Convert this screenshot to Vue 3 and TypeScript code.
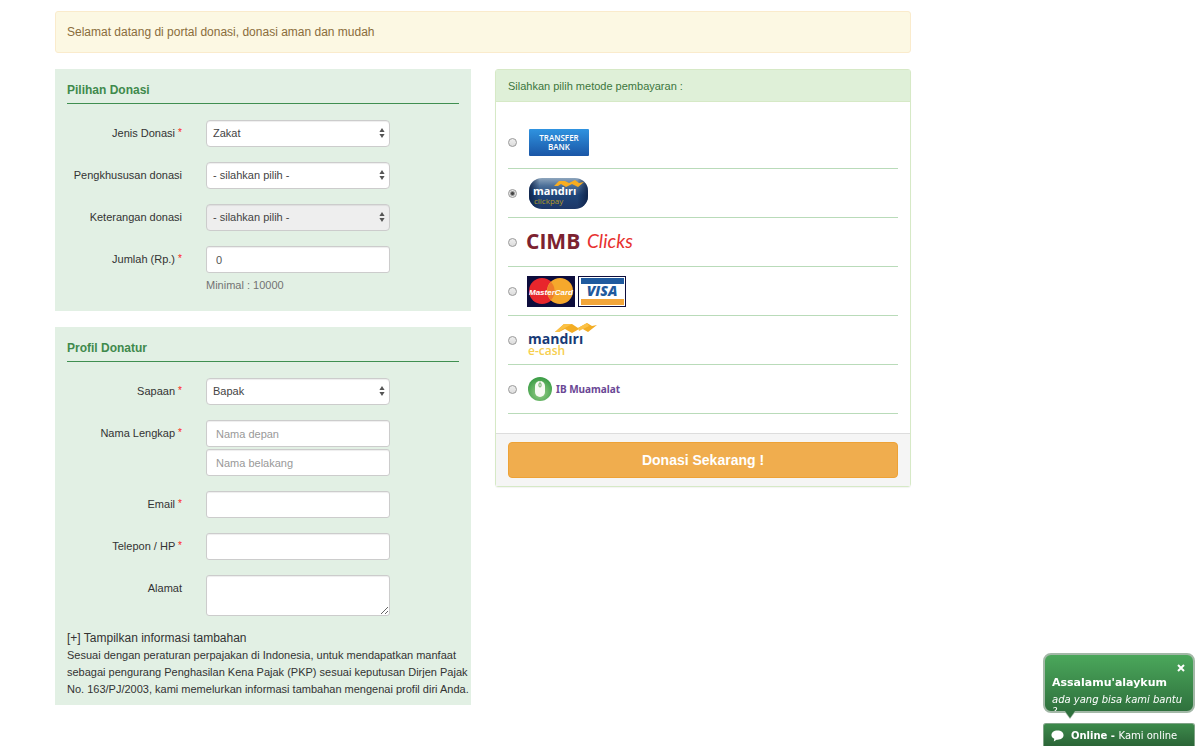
<script setup lang="ts">
import { ref } from 'vue'

interface Choice {
  id: string
  label: string
}

const methods: Choice[] = [
  { id: 'transfer', label: 'Transfer Bank' },
  { id: 'clickpay', label: 'Mandiri Clickpay' },
  { id: 'cimb', label: 'CIMB Clicks' },
  { id: 'card', label: 'MasterCard dan Visa' },
  { id: 'ecash', label: 'Mandiri e-cash' },
  { id: 'muamalat', label: 'IB Muamalat' },
]

const method = ref('clickpay')
const jenis = ref('Zakat')
const jumlah = ref('0')
const sapaan = ref('Bapak')
const chatOpen = ref(true)
</script>

<template>
  <main class="page">
    <div class="alert" role="status">Selamat datang di portal donasi, donasi aman dan mudah</div>

    <form class="columns" @submit.prevent>
      <div class="column">
        <section class="panel">
          <h2>Pilihan Donasi</h2>
          <div class="row">
            <label for="jenis">Jenis Donasi <sup>*</sup></label>
            <div class="select">
              <select id="jenis" v-model="jenis">
                <option>Zakat</option>
                <option>Infaq</option>
              </select>
              <svg class="arrows" viewBox="0 0 6 10" aria-hidden="true"><path d="M3 0 5.6 4H.4zM3 10 .4 6h5.2z" /></svg>
            </div>
          </div>
          <div class="row">
            <label for="khusus">Pengkhususan donasi</label>
            <div class="select">
              <select id="khusus">
                <option>- silahkan pilih -</option>
              </select>
              <svg class="arrows" viewBox="0 0 6 10" aria-hidden="true"><path d="M3 0 5.6 4H.4zM3 10 .4 6h5.2z" /></svg>
            </div>
          </div>
          <div class="row">
            <label for="keterangan">Keterangan donasi</label>
            <div class="select">
              <select id="keterangan" disabled>
                <option>- silahkan pilih -</option>
              </select>
              <svg class="arrows" viewBox="0 0 6 10" aria-hidden="true"><path d="M3 0 5.6 4H.4zM3 10 .4 6h5.2z" /></svg>
            </div>
          </div>
          <div class="row">
            <label for="jumlah">Jumlah (Rp.) <sup>*</sup></label>
            <div>
              <input id="jumlah" v-model="jumlah" type="text" />
              <p class="help">Minimal : 10000</p>
            </div>
          </div>
        </section>

        <section class="panel profile">
          <h2>Profil Donatur</h2>
          <div class="row">
            <label for="sapaan">Sapaan <sup>*</sup></label>
            <div class="select">
              <select id="sapaan" v-model="sapaan">
                <option>Bapak</option>
                <option>Ibu</option>
              </select>
              <svg class="arrows" viewBox="0 0 6 10" aria-hidden="true"><path d="M3 0 5.6 4H.4zM3 10 .4 6h5.2z" /></svg>
            </div>
          </div>
          <div class="row">
            <label for="depan">Nama Lengkap <sup>*</sup></label>
            <div class="stack">
              <input id="depan" type="text" placeholder="Nama depan" />
              <input type="text" placeholder="Nama belakang" aria-label="Nama belakang" />
            </div>
          </div>
          <div class="row">
            <label for="email">Email <sup>*</sup></label>
            <input id="email" type="email" />
          </div>
          <div class="row">
            <label for="telepon">Telepon / HP <sup>*</sup></label>
            <input id="telepon" type="tel" />
          </div>
          <div class="row">
            <label for="alamat">Alamat</label>
            <textarea id="alamat"></textarea>
          </div>
          <button type="button" class="toggle">[+] Tampilkan informasi tambahan</button>
          <p class="note">
            Sesuai dengan peraturan perpajakan di Indonesia, untuk mendapatkan manfaat<br />
            sebagai pengurang Penghasilan Kena Pajak (PKP) sesuai keputusan Dirjen Pajak<br />
            No. 163/PJ/2003, kami memelurkan informasi tambahan mengenai profil diri Anda.
          </p>
        </section>
      </div>

      <section class="payment">
        <h2>Silahkan pilih metode pembayaran :</h2>
        <div class="methods">
          <div v-for="m in methods" :key="m.id" class="method">
            <input :id="m.id" v-model="method" type="radio" name="metode" :value="m.id" :aria-label="m.label" />
            <label :for="m.id">
              <svg v-if="m.id === 'transfer'" class="logo" viewBox="0 0 110 40">
                <defs>
                  <linearGradient id="gTransfer" x1="0" y1="0" x2="0" y2="1">
                    <stop offset="0" stop-color="#2f93e0" />
                    <stop offset="1" stop-color="#1a56a6" />
                  </linearGradient>
                </defs>
                <rect x="4" y="7" width="60" height="27" rx="1" fill="url(#gTransfer)" />
                <g class="open" fill="#fff" font-size="8" font-weight="600" text-anchor="middle">
                  <text x="34" y="19">TRANSFER</text>
                  <text x="34" y="28">BANK</text>
                </g>
              </svg>

              <svg v-else-if="m.id === 'clickpay'" class="logo" viewBox="0 0 110 40">
                <defs>
                  <linearGradient id="gClick" x1="0" y1="0" x2="0" y2="1">
                    <stop offset="0" stop-color="#8fa6bd" />
                    <stop offset=".25" stop-color="#4d7099" />
                    <stop offset=".55" stop-color="#1f4579" />
                    <stop offset="1" stop-color="#1d3767" />
                  </linearGradient>
                  <linearGradient id="gEdge" x1="0" y1="0" x2="1" y2="0">
                    <stop offset="0" stop-color="#0d2147" stop-opacity=".9" />
                    <stop offset=".18" stop-color="#0d2147" stop-opacity="0" />
                    <stop offset=".82" stop-color="#0d2147" stop-opacity="0" />
                    <stop offset="1" stop-color="#0d2147" stop-opacity=".9" />
                  </linearGradient>
                </defs>
                <rect x="4" y="5" width="59" height="31" rx="13" fill="url(#gClick)" />
                <rect x="4" y="5" width="59" height="31" rx="13" fill="url(#gEdge)" />
                <path d="M29 13 34 8h6l4 2 6-3 4 3 5-1-6 5-6-3-6 3-5-3-3 2z" fill="#f8ad20" />
                <text class="open" x="8" y="22" font-size="11" font-weight="700" fill="#fff">mandırı</text>
                <text class="open" x="9" y="31" font-size="8" fill="#b59b25">clickpay</text>
              </svg>

              <svg v-else-if="m.id === 'cimb'" class="logo" viewBox="0 0 110 40">
                <text class="open" x="1" y="27" font-size="21" font-weight="700" fill="#7c2230">CIMB</text>
                <text class="lato" x="62" y="26" font-size="19" font-style="italic" fill="#e7312f">Clicks</text>
              </svg>

              <svg v-else-if="m.id === 'card'" class="logo" viewBox="0 0 110 40">
                <rect x="2" y="5" width="48" height="31" fill="#0d0d3c" />
                <circle cx="17" cy="20" r="13" fill="#e8262c" />
                <circle cx="35" cy="20" r="13" fill="#f5a82c" />
                <path d="M26 11a13 13 0 0 0 0 18 13 13 0 0 0 0-18" fill="#ee7b2a" />
                <text class="arial" x="26" y="24" font-size="8" font-weight="700" font-style="italic" fill="#fff" text-anchor="middle">MasterCard</text>
                <rect x="53" y="5" width="48" height="31" fill="#0d0d3c" />
                <rect x="54" y="6" width="46" height="29" fill="#fff" />
                <rect x="56" y="7" width="43" height="6" fill="#1f5a9e" />
                <rect x="56" y="28" width="43" height="6" fill="#f2a63a" />
                <text class="open" x="77" y="25" font-size="14" font-weight="800" font-style="italic" fill="#1f5a9e" text-anchor="middle">VISA</text>
              </svg>

              <svg v-else-if="m.id === 'ecash'" class="logo" viewBox="0 0 110 40">
                <path d="M30 12 39 4h8l6 4 9-5 5 3 5-1-9 7-7-4-9 5-7-4-6 3z" fill="#f3ad24" />
                <path d="M30 12 39 4h8l-9 5-4 3zM53 8l9-5 2 3-10 5z" fill="#fbc145" />
                <text class="open" x="3" y="24" font-size="14" font-weight="700" fill="#183a76">mandırı</text>
                <text class="open" x="3" y="35" font-size="12" font-weight="600" fill="#f7cf4f">e-cash</text>
              </svg>

              <svg v-else class="logo" viewBox="0 0 110 40">
                <defs>
                  <radialGradient id="gMouse" cx=".5" cy=".65" r=".6">
                    <stop offset="0" stop-color="#9bd08b" />
                    <stop offset="1" stop-color="#3f9f49" />
                  </radialGradient>
                </defs>
                <circle cx="15" cy="20" r="12" fill="url(#gMouse)" />
                <rect x="10" y="12" width="10" height="16" rx="5" fill="#f7faf4" />
                <path d="M15 12v3" fill="none" stroke="#b9d3ad" />
                <rect x="14" y="14" width="2" height="4" rx="1" fill="#fff" stroke="#69a861" stroke-width="1" />
                <text class="noto" x="31" y="24" font-size="10" font-weight="700" fill="#6a4795">IB Muamalat</text>
              </svg>
            </label>
          </div>
        </div>
        <footer>
          <button type="submit" class="donate">Donasi Sekarang !</button>
        </footer>
      </section>
    </form>

    <aside class="chat">
      <div v-if="chatOpen" class="bubble">
        <button type="button" class="close" aria-label="Tutup" @click="chatOpen = false">
          <svg viewBox="0 0 8 8" aria-hidden="true"><path d="M1 1l6 6M7 1L1 7" /></svg>
        </button>
        <div class="message">
          <strong>Assalamu'alaykum</strong>
          <em>ada yang bisa kami bantu ?</em>
        </div>
        <svg class="tail" viewBox="0 0 12 8" aria-hidden="true">
          <path class="edge" d="M0 0 6 8 12 0z" />
          <path class="fill" d="M1 0 6 7 11 0z" />
        </svg>
      </div>
      <button type="button" class="online" @click="chatOpen = true">
        <svg viewBox="0 0 14 12" aria-hidden="true"><path d="M7 0c4 0 6.500 2 6.500 5S11 10 7 10H6l-3 2 .5-3C1.500 8 .5 7 .5 5 .5 2 3 0 7 0z" /></svg>
        <span><b>Online - </b>Kami online</span>
      </button>
    </aside>
  </main>
</template>

<style>
body {
  margin: 0;
  background: #fff;
}
</style>

<style scoped>
* {
  box-sizing: border-box;
}
.page {
  max-width: 966px;
  padding: 11px 55px 16px;
  font-family: "Liberation Sans", Arial, sans-serif;
  font-size: 11px;
  line-height: 17px;
  color: #333;
}
button,
input,
select,
textarea {
  font: inherit;
}
h2,
p {
  margin: 0;
}
.alert {
  padding: 12px 11px;
  border: 1px solid #faebcc;
  border-radius: 3px;
  background: #fcf8e3;
  color: #8a6d3b;
  font-size: 12px;
  line-height: 16px;
}
.columns {
  display: grid;
  grid-template-columns: minmax(0, 1fr) minmax(0, 1fr);
  align-items: start;
  gap: 24px;
  margin-top: 16px;
}
.column {
  display: grid;
  grid-template-columns: minmax(0, 1fr);
  gap: 16px;
}
.panel {
  padding: 13px 12px 2px;
  background: #e2f0e4;
}
.profile {
  padding-bottom: 7px;
}
.panel h2 {
  margin-bottom: 16px;
  padding-bottom: 4px;
  border-bottom: 1px solid #3f8f50;
  color: #3f8a4c;
  font-size: 12px;
  font-weight: 700;
}
.row {
  display: grid;
  grid-template-columns: 115fr 184fr 45fr;
  gap: 24px;
  align-items: start;
  margin-bottom: 15px;
}
.row > label {
  padding-top: 5px;
  text-align: right;
  white-space: nowrap;
  justify-self: end;
}
sup {
  color: #f22;
  font-size: 10px;
  line-height: 1;
  vertical-align: 1px;
}
.row input,
.row select,
.row textarea {
  display: block;
  width: 100%;
  height: 27px;
  margin: 0;
  padding: 0 9px;
  border: 1px solid #ccc;
  border-radius: 3px;
  background: #fff;
  color: #555;
  box-shadow: inset 0 1px 1px rgba(0, 0, 0, 0.07);
}
.row select {
  appearance: none;
  padding: 0 6px;
  border-radius: 4px;
  color: #444;
}
.row select:disabled {
  background: #eee;
  opacity: 1;
}
.row textarea {
  height: 41px;
}
.row input::placeholder {
  color: #999;
}
.select {
  position: relative;
}
.arrows {
  position: absolute;
  top: 8px;
  right: 5px;
  width: 6px;
  height: 10px;
  fill: #555;
  pointer-events: none;
}
.stack {
  display: grid;
  gap: 2px;
}
.help {
  margin-top: 4px;
  color: #737373;
}
.toggle {
  display: block;
  margin-top: -1px;
  padding: 0;
  border: 0;
  background: none;
  color: #333;
  font-size: 12px;
}
.note {
  white-space: nowrap;
}
.payment {
  border: 1px solid #d6e9c6;
  border-radius: 3px;
  box-shadow: 0 1px 1px rgba(0, 0, 0, 0.05);
}
.payment h2 {
  padding: 8px 12px 7px;
  border-bottom: 1px solid #d6e9c6;
  background: #dff0d8;
  color: #3c763d;
  font-size: 11px;
  font-weight: 400;
  line-height: 16px;
}
.methods {
  padding: 18px 12px 19px;
}
.method {
  display: flex;
  align-items: center;
  gap: 8px;
  height: 49px;
  border-bottom: 1px solid #b9dbb9;
}
.method:first-child {
  padding-bottom: 4px;
}
.method input {
  appearance: none;
  width: 9px;
  height: 9px;
  margin: 0;
  border: 1px solid #999;
  border-radius: 50%;
  background: linear-gradient(#eee, #ddd);
}
.method input:checked {
  background: radial-gradient(circle, #444 0 1px, #e6e6e6 3px);
}
.logo {
  display: block;
  width: 110px;
  height: 40px;
}
.open {
  font-family: "Open Sans", sans-serif;
}
.noto {
  font-family: "Noto Sans", sans-serif;
}
.lato {
  font-family: Lato, sans-serif;
}
.arial {
  font-family: "Liberation Sans", sans-serif;
}
footer {
  padding: 8px 12px;
  border-top: 1px solid #ddd;
  background: #f5f5f5;
}
.donate {
  display: block;
  width: 100%;
  height: 36px;
  border: 1px solid #eea236;
  border-radius: 4px;
  background: #f0ad4e;
  color: #fff;
  font-size: 14px;
  font-weight: 700;
}
.chat {
  position: fixed;
  right: 7px;
  bottom: 0;
  width: 152px;
  font-family: "DejaVu Sans", Verdana, sans-serif;
  font-size: 10px;
  line-height: 12px;
  color: #fff;
}
.bubble {
  position: relative;
  height: 60px;
  margin-bottom: 10px;
  border: 2px solid #a3b8a7;
  border-radius: 8px;
  background: linear-gradient(#4ba75b, #2f713d);
}
.message {
  height: 56px;
  padding: 22px 7px 0;
  overflow: hidden;
}
.message strong,
.message em {
  display: block;
}
.message strong {
  margin-bottom: 5px;
  font-size: 11px;
}
.close {
  position: absolute;
  top: 9px;
  right: 8px;
  width: 8px;
  height: 8px;
  padding: 0;
  border: 0;
  background: none;
}
.close svg {
  display: block;
  fill: none;
  stroke: #fff;
  stroke-width: 2;
}
.tail {
  position: absolute;
  top: 56px;
  left: 19px;
  width: 12px;
  height: 8px;
}
.edge {
  fill: #a3b8a7;
}
.fill {
  fill: #2f713d;
}
.online {
  display: flex;
  align-items: center;
  gap: 7px;
  width: 100%;
  height: 23px;
  padding: 1px 7px 0;
  border: 1px solid #7fa386;
  border-bottom: 0;
  border-radius: 3px 3px 0 0;
  background: linear-gradient(#3d8a4b, #2b6537);
  color: #fff;
  text-align: left;
  white-space: nowrap;
}
.online svg {
  width: 13px;
  height: 12px;
  fill: #fff;
}
@media (max-width: 760px) {
  .columns {
    grid-template-columns: minmax(0, 1fr);
  }
  .note {
    white-space: normal;
  }
}
</style>
